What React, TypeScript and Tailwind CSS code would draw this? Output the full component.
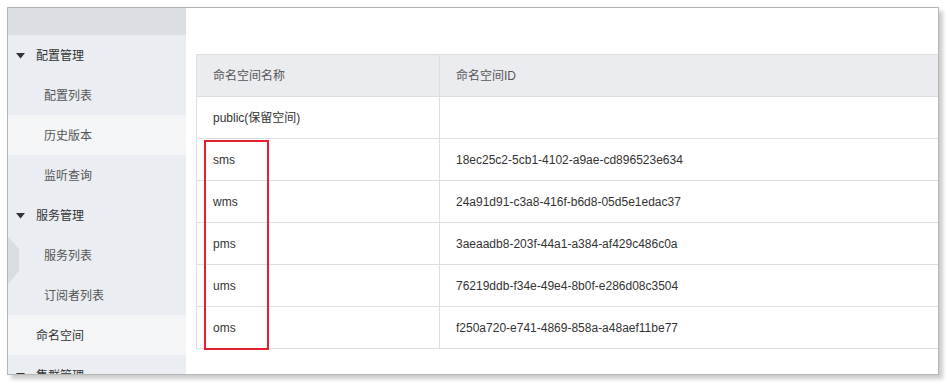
type MenuItem = { label: string; level: 1 | 2; caret?: boolean; active?: boolean }

const menu: MenuItem[] = [
  { label: "配置管理", level: 1, caret: true },
  { label: "配置列表", level: 2 },
  { label: "历史版本", level: 2, active: true },
  { label: "监听查询", level: 2 },
  { label: "服务管理", level: 1, caret: true },
  { label: "服务列表", level: 2 },
  { label: "订阅者列表", level: 2 },
  { label: "命名空间", level: 1, active: true },
  { label: "集群管理", level: 1, caret: true },
]

const rows = [
  { name: "public(保留空间)", id: "" },
  { name: "sms", id: "18ec25c2-5cb1-4102-a9ae-cd896523e634" },
  { name: "wms", id: "24a91d91-c3a8-416f-b6d8-05d5e1edac37" },
  { name: "pms", id: "3aeaadb8-203f-44a1-a384-af429c486c0a" },
  { name: "ums", id: "76219ddb-f34e-49e4-8b0f-e286d08c3504" },
  { name: "oms", id: "f250a720-e741-4869-858a-a48aef11be77" },
]

function Caret() {
  return (
    <svg width="9" height="6" viewBox="0 0 9 6" className="shrink-0">
      <path d="M0 0 L9 0 L4.5 5.5 Z" fill="#333" />
    </svg>
  )
}

function Sidebar() {
  return (
    <div className="relative w-[178px] shrink-0 bg-[#eaedf1]">
      <div className="h-[27px] bg-[#dbdee3]" />
      {menu.map((m) => (
        <div
          key={m.label}
          className={`h-10 flex items-center pt-[1px] ${m.active ? "bg-[#f4f5f7]" : ""} ${m.level === 1 ? "pl-2 text-[#333]" : "pl-9 text-[#555]"}`}
        >
          {m.caret ? <Caret /> : m.level === 1 && <span className="w-[9px]" />}
          {m.level === 1 ? <span className="ml-[11px]">{m.label}</span> : m.label}
        </div>
      ))}
      {/* collapse handle */}
      <svg width="12" height="47" viewBox="0 0 12 47" className="absolute left-0 top-[229px]">
        <path d="M0 0 L11 12 L11 34 L0 47 Z" fill="#d9dce1" />
      </svg>
    </div>
  )
}

export default function App() {
  return (
    <div
      className="w-[950px] h-[386px] bg-white pt-[7px] pl-[7px] text-[12px]"
      style={{ fontFamily: '"Liberation Sans", "Noto Sans CJK SC", sans-serif' }}
    >
      <div className="w-[932px] h-[368px] border border-[#b5b5b5] shadow-[4px_4px_4px_rgba(0,0,0,0.2)] overflow-hidden flex">
        <Sidebar />
        <div className="flex-1 pt-[46px] pl-[10px]">
          <div className="relative border-l border-t border-[#dcdee2]">
            <div className="flex h-[42px] bg-[#ebecf0] border-b border-[#dcdee2] text-[#555]">
              <div className="w-[243px] border-r border-[#dcdee2] flex items-center pl-4">命名空间名称</div>
              <div className="flex-1 flex items-center pl-4">命名空间ID</div>
            </div>
            {rows.map((r) => (
              <div key={r.name} className="flex h-[42px] border-b border-[#dcdee2] text-[#333]">
                <div className="w-[243px] border-r border-[#dcdee2] flex items-center pl-4">{r.name}</div>
                <div className="flex-1 flex items-center pl-4">{r.id}</div>
              </div>
            ))}
            <div className="absolute left-[7px] top-[85px] w-[65px] h-[210px] border-2 border-[#e3202b]" />
          </div>
        </div>
      </div>
    </div>
  )
}
